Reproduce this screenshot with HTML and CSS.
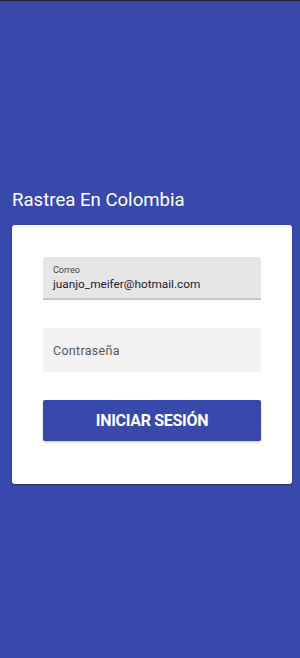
FILE: index.html
```html
<!DOCTYPE html>
<html lang="es">
<head>
<meta charset="utf-8">
<title>Rastrea En Colombia</title>
<link rel="stylesheet" href="styles.css">
</head>
<body>
<div class="topline"></div>
<main class="screen">
  <h1 class="title">Rastrea En Colombia</h1>
  <section class="card">
    <div class="field field-filled">
      <span class="field-label">Correo</span>
      <span class="field-value">juanjo_meifer@hotmail.com</span>
    </div>
    <div class="field field-empty">
      <span class="field-placeholder">Contraseña</span>
    </div>
    <button class="btn" type="button">INICIAR SESIÓN</button>
  </section>
</main>
</body>
</html>
```
FILE: styles.css
```css
html, body {
  margin: 0;
  padding: 0;
  height: 100%;
}
body {
  background: #3949ab;
  font-family: Roboto, "Noto Sans", sans-serif;
  display: flex;
  flex-direction: column;
}
.topline {
  height: 1px;
  background: #222;
  flex: none;
}
.screen {
  flex: 1;
  display: flex;
  flex-direction: column;
  padding: 185px 8px 0 12px;
}
.title {
  margin: 0;
  color: #fff;
  font-weight: 400;
  font-size: 18.6px;
  line-height: 28px;
  height: 28px;
}
.card {
  margin-top: 11px;
  background: #fff;
  border-radius: 3px;
  box-shadow: 0 1px 2px rgba(0,0,0,0.35);
  height: 259px;
  box-sizing: border-box;
  padding: 32px 31px 0 31px;
  display: flex;
  flex-direction: column;
}
.field {
  box-sizing: border-box;
  display: flex;
  flex-direction: column;
  justify-content: center;
  padding: 0 10px;
  border-top-left-radius: 2px;
  border-top-right-radius: 2px;
}
.field-filled {
  background: #e6e6e6;
  height: 43px;
  border-bottom: 2px solid #c4c4c4;
}
.field-label {
  font-size: 9px;
  line-height: 11px;
  color: #444;
  margin-top: 2px;
}
.field-value {
  font-size: 11.8px;
  line-height: 16px;
  color: #1c1c30;
}
.field-empty {
  margin-top: 28px;
  background: #f2f2f2;
  height: 44px;
}
.field-placeholder {
  font-size: 12.5px;
  color: #555;
  letter-spacing: 0.3px;
}
.btn {
  margin-top: 28px;
  height: 41px;
  border: none;
  border-radius: 2px;
  background: #3949ab;
  color: #fff;
  font-family: Roboto, "Noto Sans", sans-serif;
  font-weight: 700;
  font-size: 16px;
  letter-spacing: -0.3px;
  box-shadow: 0 1px 2px rgba(0,0,0,0.25);
  padding: 0;
}
```
